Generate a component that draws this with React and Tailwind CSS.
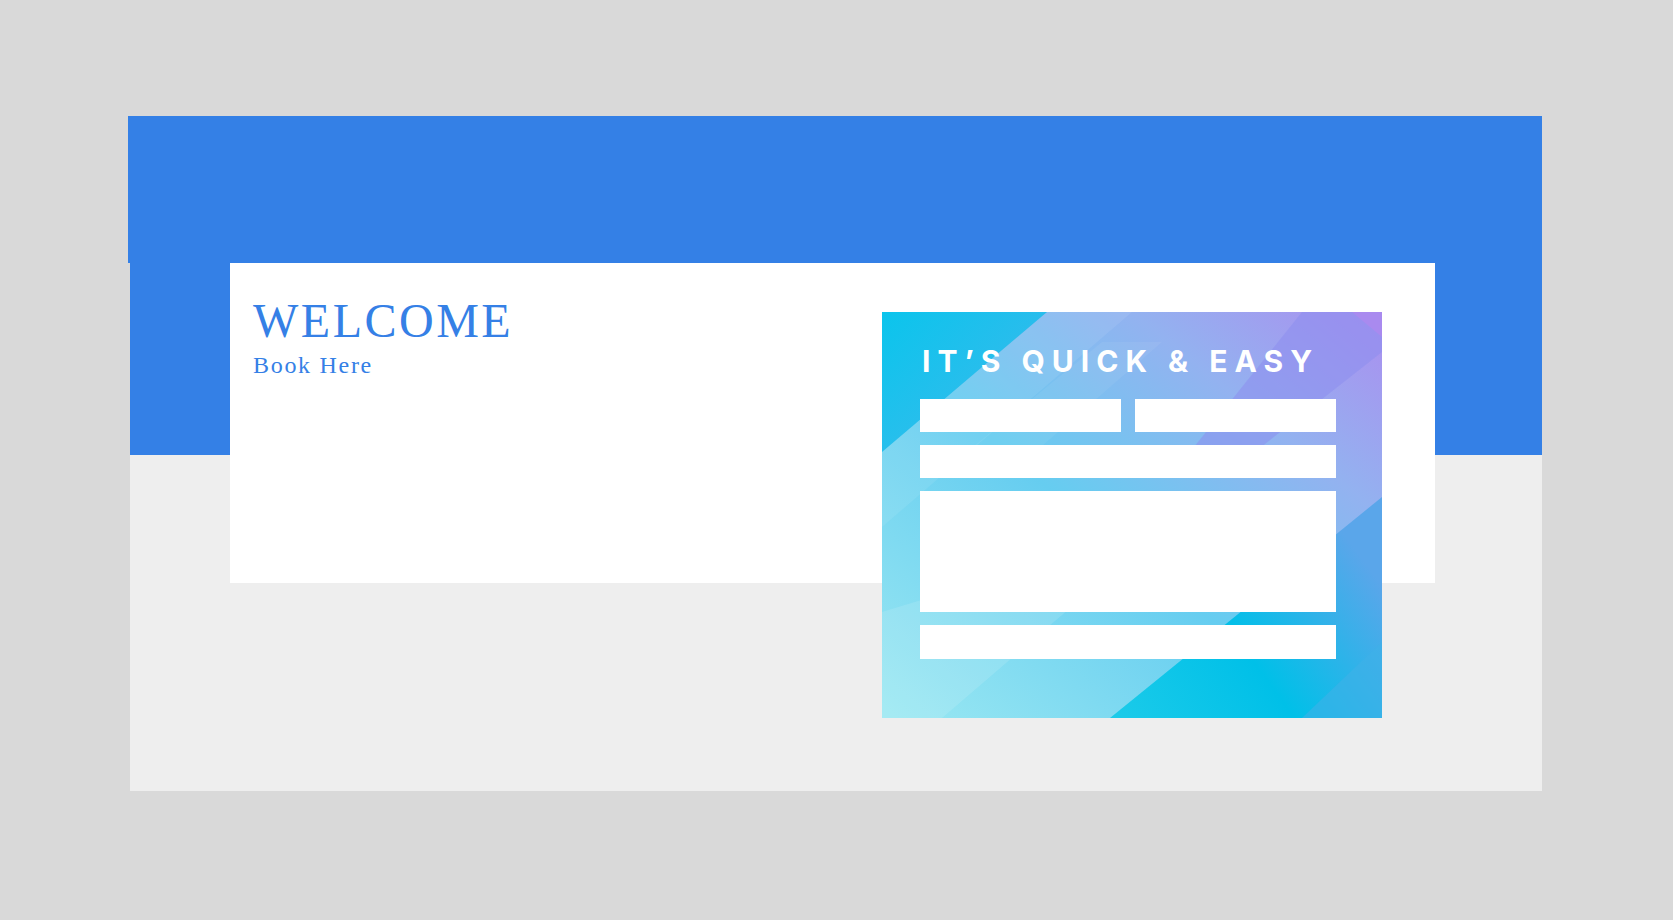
import React from "react";

function FormArt() {
  return (
    <svg className="absolute inset-0 w-full h-full" viewBox="0 0 500 406" preserveAspectRatio="none">
      <defs>
        <linearGradient id="base" x1="0" y1="1" x2="1" y2="0">
          <stop offset="0" stopColor="#9ae8f2" />
          <stop offset="0.45" stopColor="#66cdf0" />
          <stop offset="0.75" stopColor="#93b2f0" />
          <stop offset="1" stopColor="#ab8eef" />
        </linearGradient>
        <linearGradient id="cyan" x1="0" y1="1" x2="1" y2="0.4">
          <stop offset="0" stopColor="#1ccbe9" />
          <stop offset="0.5" stopColor="#00c0e8" />
          <stop offset="1" stopColor="#5aa6ea" />
        </linearGradient>
        <linearGradient id="tl" x1="0" y1="0" x2="1" y2="1">
          <stop offset="0" stopColor="#00c4ec" />
          <stop offset="1" stopColor="#3cb6ec" />
        </linearGradient>
      </defs>
      <rect x="0" y="0" width="500" height="406" fill="url(#base)" />
      <polygon points="0,0 165,0 0,140" fill="url(#tl)" opacity="0.9" />
      <polygon points="0,140 165,0 250,0 0,215" fill="#ffffff" opacity="0.08" />
      <polygon points="228,406 500,406 500,185" fill="url(#cyan)" />
      <polygon points="420,406 500,406 500,330" fill="#3fb0e8" opacity="0.6" />
      <polygon points="0,300 0,406 60,406 160,320 260,235 230,230" fill="#ffffff" opacity="0.12" />
      <polygon points="420,0 500,0 500,40 360,150 300,150" fill="#8c8eee" opacity="0.55" />
      <polygon points="470,0 500,0 500,25" fill="#a98aef" />
      <polygon points="60,160 220,30 280,30 130,160" fill="#ffffff" opacity="0.06" />
    </svg>
  );
}

export default function App() {
  return (
    <div className="min-h-screen w-full bg-[#d9d9d9] pt-[116px] pl-[128px]" style={{ fontFamily: '"Liberation Serif", serif' }}>
      <div className="w-[1414px]">
        <div className="h-[147px] bg-[#3480e6]" />
        <div className="h-[528px] ml-[2px] bg-[linear-gradient(to_bottom,#3480e6_192px,#eeeeee_192px)]">
          <div className="ml-[100px] mr-[107px] h-[320px] bg-white flex items-start">
            <div className="flex-1 pl-[23px] pt-[34px]">
              <h1 className="text-[48px] leading-none tracking-[2.5px] text-[#3580e6] font-normal" style={{ fontFamily: '"Liberation Serif", serif' }}>
                WELCOME
              </h1>
              <p className="mt-[8px] text-[24px] leading-none tracking-[1.7px] text-[#3580e6]" style={{ fontFamily: '"Liberation Serif", serif' }}>
                Book Here
              </p>
            </div>
            <div className="relative mt-[49px] mr-[53px] w-[500px] h-[406px] shrink-0 overflow-hidden">
              <FormArt />
              <div className="relative pl-[38px] pr-[46px] pt-[34px]">
                <div className="pl-[2px] text-[30px] leading-none font-bold tracking-[7px] text-white whitespace-nowrap" style={{ fontFamily: 'Inter, sans-serif' }}>
                  IT’S QUICK &amp; EASY
                </div>
                <div className="mt-[23px] flex gap-[14px]">
                  <div className="h-[33px] flex-1 bg-white" />
                  <div className="h-[33px] flex-1 bg-white" />
                </div>
                <div className="mt-[13px] h-[33px] bg-white" />
                <div className="mt-[13px] h-[121px] bg-white" />
                <div className="mt-[13px] h-[34px] bg-white" />
              </div>
            </div>
          </div>
        </div>
      </div>
    </div>
  );
}
